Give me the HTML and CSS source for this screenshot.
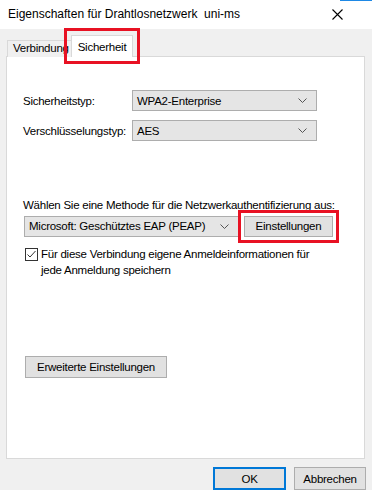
FILE: index.html
```html
<!DOCTYPE html>
<html lang="de">
<head>
<meta charset="utf-8">
<link rel="stylesheet" href="styles.css">
</head>
<body>
<div class="window">
  <div class="titlebar">
    <span class="title">Eigenschaften für Drahtlosnetzwerk&nbsp; uni-ms</span>
    <svg class="close" width="11" height="11" viewBox="0 0 11 11"><path d="M0.5 0.5 L10.5 10.5 M10.5 0.5 L0.5 10.5" stroke="#000" stroke-width="1.1" fill="none"/></svg>
  </div>
  <div class="body">
    <div class="tabs">
      <div class="tab">Verbindung</div>
      <div class="tab active mark">Sicherheit</div>
    </div>
    <div class="panel">
      <div class="row">
        <span class="label">Sicherheitstyp:</span>
        <div class="select wide"><span>WPA2-Enterprise</span><svg class="chev" width="9" height="5" viewBox="0 0 9 5"><path d="M0.5 0.5 L4.5 4.5 L8.5 0.5" stroke="#555" fill="none"/></svg></div>
      </div>
      <div class="row second">
        <span class="label">Verschlüsselungstyp:</span>
        <div class="select wide"><span>AES</span><svg class="chev" width="9" height="5" viewBox="0 0 9 5"><path d="M0.5 0.5 L4.5 4.5 L8.5 0.5" stroke="#555" fill="none"/></svg></div>
      </div>
      <div class="method-label">Wählen Sie eine Methode für die Netzwerkauthentifizierung aus:</div>
      <div class="method-row">
        <div class="select method"><span>Microsoft: Geschütztes EAP (PEAP)</span><svg class="chev" width="9" height="5" viewBox="0 0 9 5"><path d="M0.5 0.5 L4.5 4.5 L8.5 0.5" stroke="#555" fill="none"/></svg></div>
        <div class="button settings mark">Einstellungen</div>
      </div>
      <div class="check-row">
        <svg class="checkbox" width="13" height="13" viewBox="0 0 13 13"><rect x="0.5" y="0.5" width="12" height="12" fill="#fff" stroke="#333"/><path d="M2.5 6.5 L5 9 L10.5 3" stroke="#333" stroke-width="1" fill="none"/></svg>
        <span class="check-text">Für diese Verbindung eigene Anmeldeinformationen für<br>jede Anmeldung speichern</span>
      </div>
      <div class="button advanced">Erweiterte Einstellungen</div>
    </div>
    <div class="footer">
      <div class="button ok">OK</div>
      <div class="button cancel">Abbrechen</div>
    </div>
  </div>
</div>
</body>
</html>
```
FILE: styles.css
```css
* { box-sizing: border-box; }
html, body { margin: 0; padding: 0; }
body {
  width: 372px;
  height: 490px;
  overflow: hidden;
  background: #f0f0f0;
  font-family: "Liberation Sans", Arial, sans-serif;
  font-size: 11.5px;
  letter-spacing: -0.25px;
  color: #000;
}
.window { width: 372px; height: 490px; display: flex; flex-direction: column; }
.titlebar {
  height: 31px;
  display: flex;
  align-items: center;
  justify-content: space-between;
  padding: 0 29px 2px 8px;
  background-color: #fff;
  background-image: linear-gradient(to right, #fff 340px, #1e88e5 340px);
  background-size: 100% 1px;
  background-repeat: no-repeat;
}
.title { font-size: 12px; letter-spacing: 0; }
.close { display: block; margin-top: 2px; }
.body { flex: 1; display: flex; flex-direction: column; padding: 6px 7px 0 6px; }
.tabs { display: flex; align-items: flex-end; height: 22px; padding-left: 1px; position: relative; z-index: 1; margin-bottom: -1px; }
.tab {
  height: 17px;
  border: 1px solid #d9d9d9;
  border-bottom: none;
  background: #f0f0f0;
  padding: 0 4px 0 5px;
  line-height: 15px;
  white-space: nowrap;
}
.tab.active {
  position: relative;
  height: 22px;
  background: #fff;
  margin-left: -3px;
  padding: 3px 6px 0 6px;
  line-height: 16px;
}
.mark { outline: 3px solid #e81123; outline-offset: 4px; }
.panel {
  height: 403px;
  background: #fff;
  border: 1px solid #d9d9d9;
  padding: 33px 0 0 16px;
  display: flex;
  flex-direction: column;
}
.row { display: flex; align-items: center; height: 21px; }
.row.second { margin-top: 9px; }
.label { width: 109px; white-space: nowrap; }
.select {
  height: 21px;
  border: 1px solid #adadad;
  background: #e5e5e5;
  display: flex;
  align-items: center;
  justify-content: space-between;
  padding: 0 9px 0 4px;
  white-space: nowrap;
}
.select.wide { width: 185px; }
.chev { display: block; flex: none; }
.method-label { margin-top: 56px; height: 16px; line-height: 16px; white-space: nowrap; }
.method-row { display: flex; align-items: center; margin-top: 1px; height: 24px; }
.select.method { width: 215px; margin-left: 1px; }
.button {
  border: 1px solid #adadad;
  background: #e1e1e1;
  display: flex;
  align-items: center;
  justify-content: center;
  white-space: nowrap;
}
.settings { width: 89px; height: 21px; margin-left: 5px; outline-offset: 3px; }
.check-row { display: flex; align-items: flex-start; margin-top: 8px; margin-left: 2px; }
.checkbox { display: block; flex: none; margin-top: 2px; }
.check-text { margin-left: 3px; line-height: 16px; }
.advanced { width: 142px; height: 22px; margin-top: 78px; margin-left: 2px; }
.footer { display: flex; justify-content: flex-end; gap: 8px; padding: 8px 0 0 0; margin-right: -1px; }
.ok { width: 73px; height: 23px; border: 2px solid #0078d7; }
.cancel { width: 72px; height: 23px; }
```
